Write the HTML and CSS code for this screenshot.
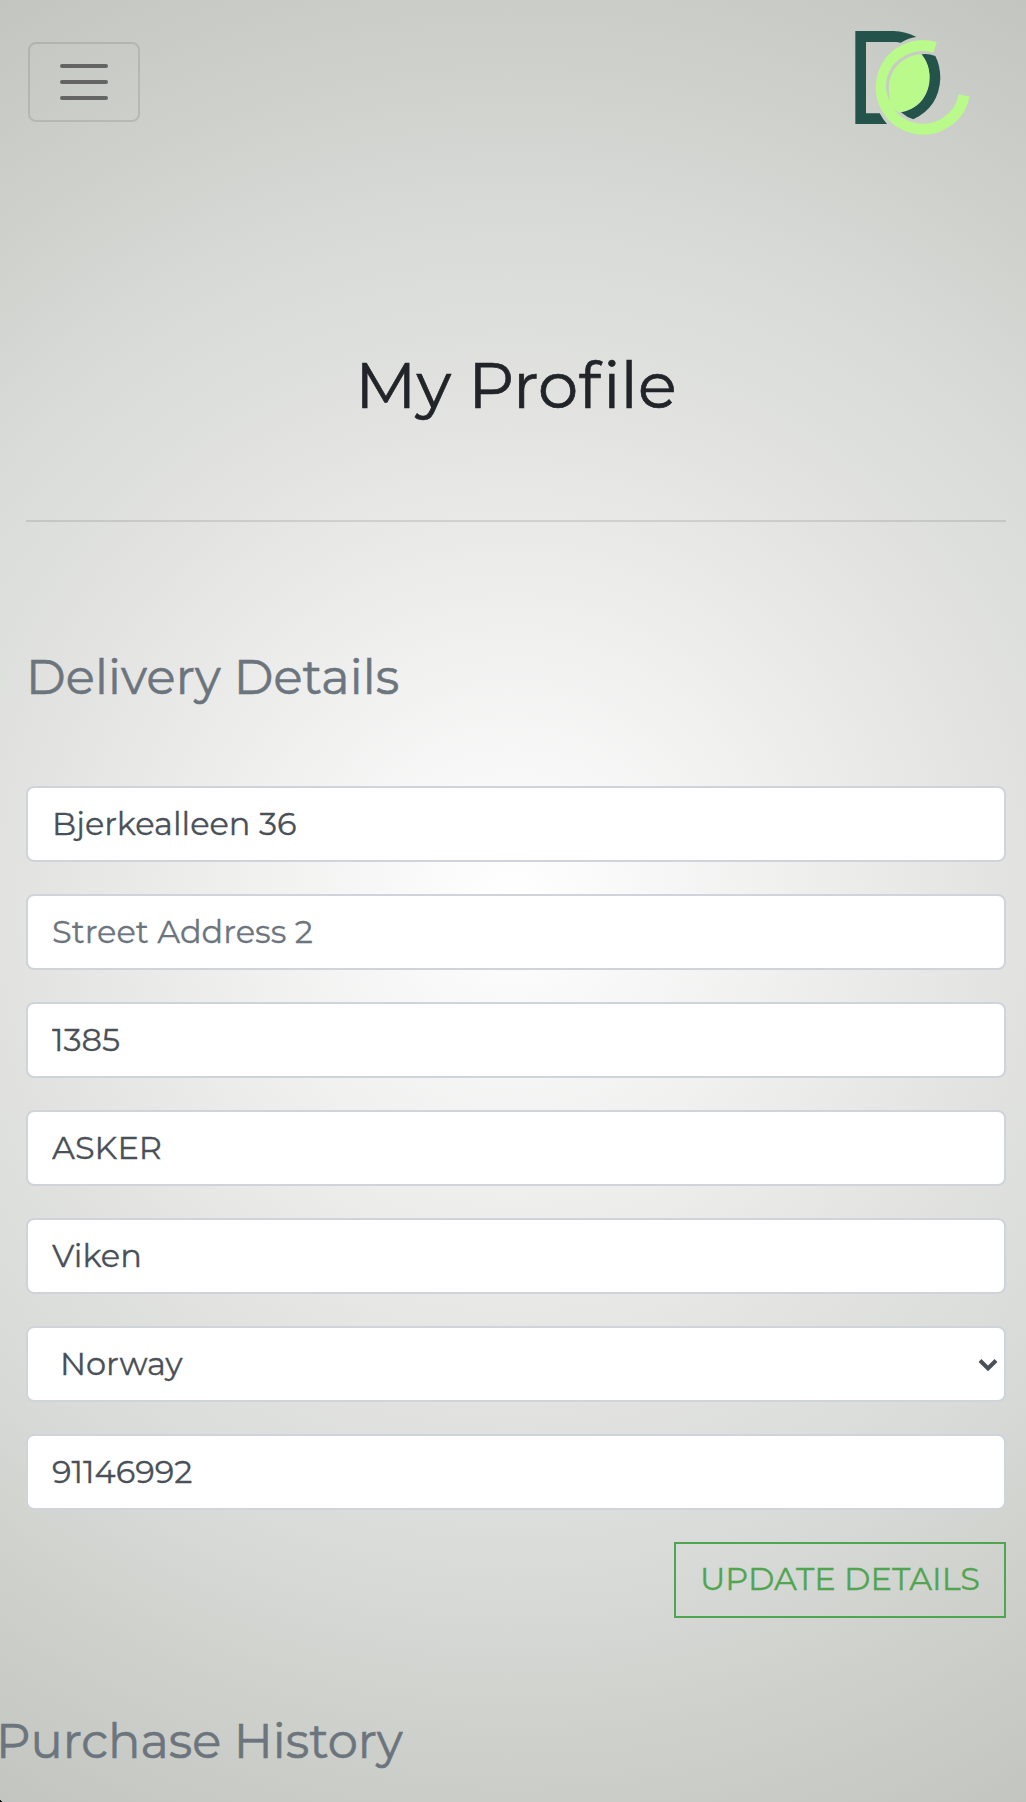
FILE: index.html
```html
<!DOCTYPE html>
<html lang="en">
<head>
<meta charset="utf-8">
<title>My Profile</title>
<link rel="stylesheet" href="styles.css">
</head>
<body>
<header class="navbar">
  <button class="toggler" type="button" aria-label="Toggle navigation">
    <svg width="60" height="60" viewBox="0 0 30 30"><path stroke="#000" stroke-opacity=".5" stroke-linecap="round" stroke-width="2" d="M4 7h22M4 15h22M4 23h22"/></svg>
  </button>
  <svg class="logo" viewBox="0 0 480 420" aria-label="Logo">
    <g fill="#23534a">
      <path d="M76 63H190Q228 64 259 81Q233 85 212 98L200 96H108V310H149Q158 327 171 342H76Z"/>
      <path d="M275 133Q294 130 316 138Q331 167 331 205Q327 292 250 328Q230 322 213 307Q285 292 298 220Q302 165 275 133Z"/>
    </g>
    <path fill="none" stroke="#b9fa8a" stroke-width="33" d="M315.500 112A125.500 125.500 0 1 0 402.500 256"/>
    <path fill="#b9fa8a" d="M273 133C298 161 304 195 294 232C282 276 246 305 204 307L181 284C165 235 178 183 213 153Q239 134 273 133Z"/>
    <path fill="#c8cac6" d="M279 122Q222 127 190 164Q167 195 168 235Q171 258 181 275Q171 233 181 201C196 160 231 136 279 130Z"/>
  </svg>
</header>
<main>
  <div class="container">
    <h1 class="title">My Pro<span class="loose">f</span>ile</h1>
    <hr class="rule">
    <h2 class="heading delivery">Delivery Details</h2>
    <form class="form">
      <input class="field street" value="Bjerkealleen 36">
      <input class="field street2" placeholder="Street Address 2">
      <input class="field postcode" value="1385">
      <input class="field town" value="ASKER">
      <input class="field county" value="Viken">
      <div class="field country"><span>Norway</span><svg class="chevron" width="20" height="14" viewBox="0 0 20 14"><path d="M2 2.500 10 10.500 18 2.500" fill="none" stroke="#495057" stroke-width="4"/></svg></div>
      <input class="field phone" value="91146992">
      <button class="update" type="button">UPDATE DETAILS</button>
    </form>
  </div>
  <h2 class="heading history">Purchase History</h2>
</main>
</body>
</html>
```
FILE: styles.css
```css
* { box-sizing: border-box; }
body {
  margin: 0;
  height: 1802px;
  overflow: hidden;
  font-family: Montserrat, Inter, sans-serif;
  font-variant-ligatures: none;
  -webkit-text-stroke-width: .3px;
  background:
    linear-gradient(to top right, #111 50%, transparent 50%) left bottom / 3px 3px no-repeat,
    radial-gradient(circle, #fff 0%, #e1e2e0 50%, #d8dbd8 65%, #cfd1cc 80%, #c3c5c0 100%);
}
.navbar {
  display: flex;
  justify-content: space-between;
  align-items: flex-start;
  height: 150px;
  padding: 10px 36px 0 28px;
}
.toggler {
  display: flex;
  align-items: center;
  justify-content: center;
  width: 112px;
  height: 80px;
  margin-top: 32px;
  padding: 0;
  border: 2px solid rgba(0, 0, 0, .1);
  border-radius: 8px;
  background: none;
}
.logo { width: 160px; height: 140px; }
.container { padding: 0 20px 0 26px; }
.title {
  height: 76px;
  margin: 197px 0 97px;
  font-size: 64px;
  font-weight: 400;
  line-height: 76px;
  letter-spacing: .2px;
  -webkit-text-stroke-width: .7px;
  text-align: center;
  color: #212529;
}
.loose { letter-spacing: 3px; }
.rule { margin: 0; border: 0; border-top: 2px solid rgba(0, 0, 0, .1); }
.heading {
  margin: 0;
  font-size: 48px;
  font-weight: 400;
  line-height: 58px;
  -webkit-text-stroke-width: .6px;
  color: #6c757d;
}
.delivery { margin: 126px 0 80px; letter-spacing: .15px; }
.form { display: flex; flex-direction: column; gap: 32px; }
.field {
  width: 100%;
  height: 76px;
  padding: 0 24px 1px;
  border: 2px solid #ced4da;
  border-radius: 8px;
  background: #fff;
  font: 400 32px Montserrat, Inter, sans-serif;
  color: #495057;
}
.field::placeholder { color: #6c757d; opacity: 1; }
.country {
  display: flex;
  align-items: center;
  justify-content: space-between;
  padding: 0 6px 1px 32px;
}
.chevron { margin-top: 3px; }
.update {
  align-self: flex-end;
  width: 332px;
  height: 76px;
  padding: 0 0 4px;
  border: 2px solid #51a551;
  background: none;
  font: 400 32px Montserrat, Inter, sans-serif;
  color: #51a551;
}
.history { margin-top: 94px; margin-left: -4px; }
```
